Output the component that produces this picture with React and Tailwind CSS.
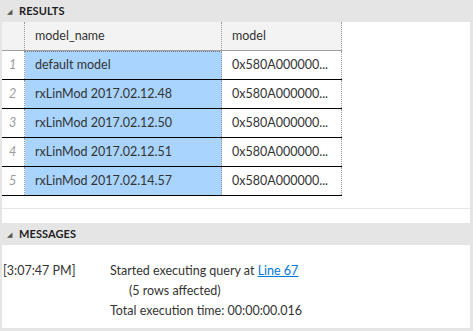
import React from 'react';

const rows = [
  { n: 1, name: 'default model' },
  { n: 2, name: 'rxLinMod 2017.02.12.48' },
  { n: 3, name: 'rxLinMod 2017.02.12.50' },
  { n: 4, name: 'rxLinMod 2017.02.12.51' },
  { n: 5, name: 'rxLinMod 2017.02.14.57' },
];

function PaneHeader({ title }) {
  return (
    <div className="h-[22px] flex items-center pl-[7px] text-[#1e1e1e]">
      <span className="text-[7px] text-[#555] mr-[7px] leading-none">◢</span>
      <span className="text-[11px] font-bold tracking-[0.1px]">{title}</span>
    </div>
  );
}

export default function App() {
  return (
    <div className="w-[473px] h-[331px] bg-[#e5e5e5] font-['Lato','Open_Sans',sans-serif] text-[#333] overflow-hidden">
      <PaneHeader title="RESULTS" />

      {/* results grid */}
      <div className="ml-[2px] mr-[3px] h-[201px] bg-white flex flex-col">
        <div className="flex flex-col w-[340px]">
          <div className="flex h-[29px] bg-[#f3f3f3] border-b border-[#a0a0a0] text-[12.5px]">
            <div className="w-[23px] border-r border-dotted border-[#999]" />
            <div className="w-[197px] border-r border-dotted border-[#999] pl-[10px] flex items-center">model_name</div>
            <div className="w-[120px] border-r border-dotted border-[#999] pl-[10px] flex items-center">model</div>
          </div>
          {rows.map((r, i) => (
            <div key={r.n} className="flex h-[29px] border-b border-black text-[12.5px]">
              <div className="w-[23px] border-r border-dotted border-[#999] pl-[7px] flex items-center italic text-[#999]">{r.n}</div>
              <div className={`w-[197px] bg-[#a8d4fd] border-r border-dotted border-[#999] pl-[10px] flex items-center ${i === 0 ? 'border-t border-t-[#777]' : ''}`}>
                {r.name}
              </div>
              <div className="w-[120px] border-r border-dotted border-[#999] pl-[10px] flex items-center">0x580A000000...</div>
            </div>
          ))}
        </div>
        <div className="flex-1" />
        <div className="h-[15px] border-t border-[#e8e8e8]" />
      </div>

      <PaneHeader title="MESSAGES" />

      {/* messages */}
      <div className="ml-[2px] mr-[3px] h-[83px] bg-white text-[12.5px] pt-[16px] leading-[20px]">
        <div className="flex">
          <div className="w-[108px] pl-[1px]">[3:07:47 PM]</div>
          <div className="flex flex-col">
            <div>
              Started executing query at{' '}
              <a href="#" className="text-[#0078d7] underline">Line 67</a>
            </div>
            <div className="pl-[19px]">(5 rows affected)</div>
            <div>Total execution time: 00:00:00.016</div>
          </div>
        </div>
      </div>
    </div>
  );
}
